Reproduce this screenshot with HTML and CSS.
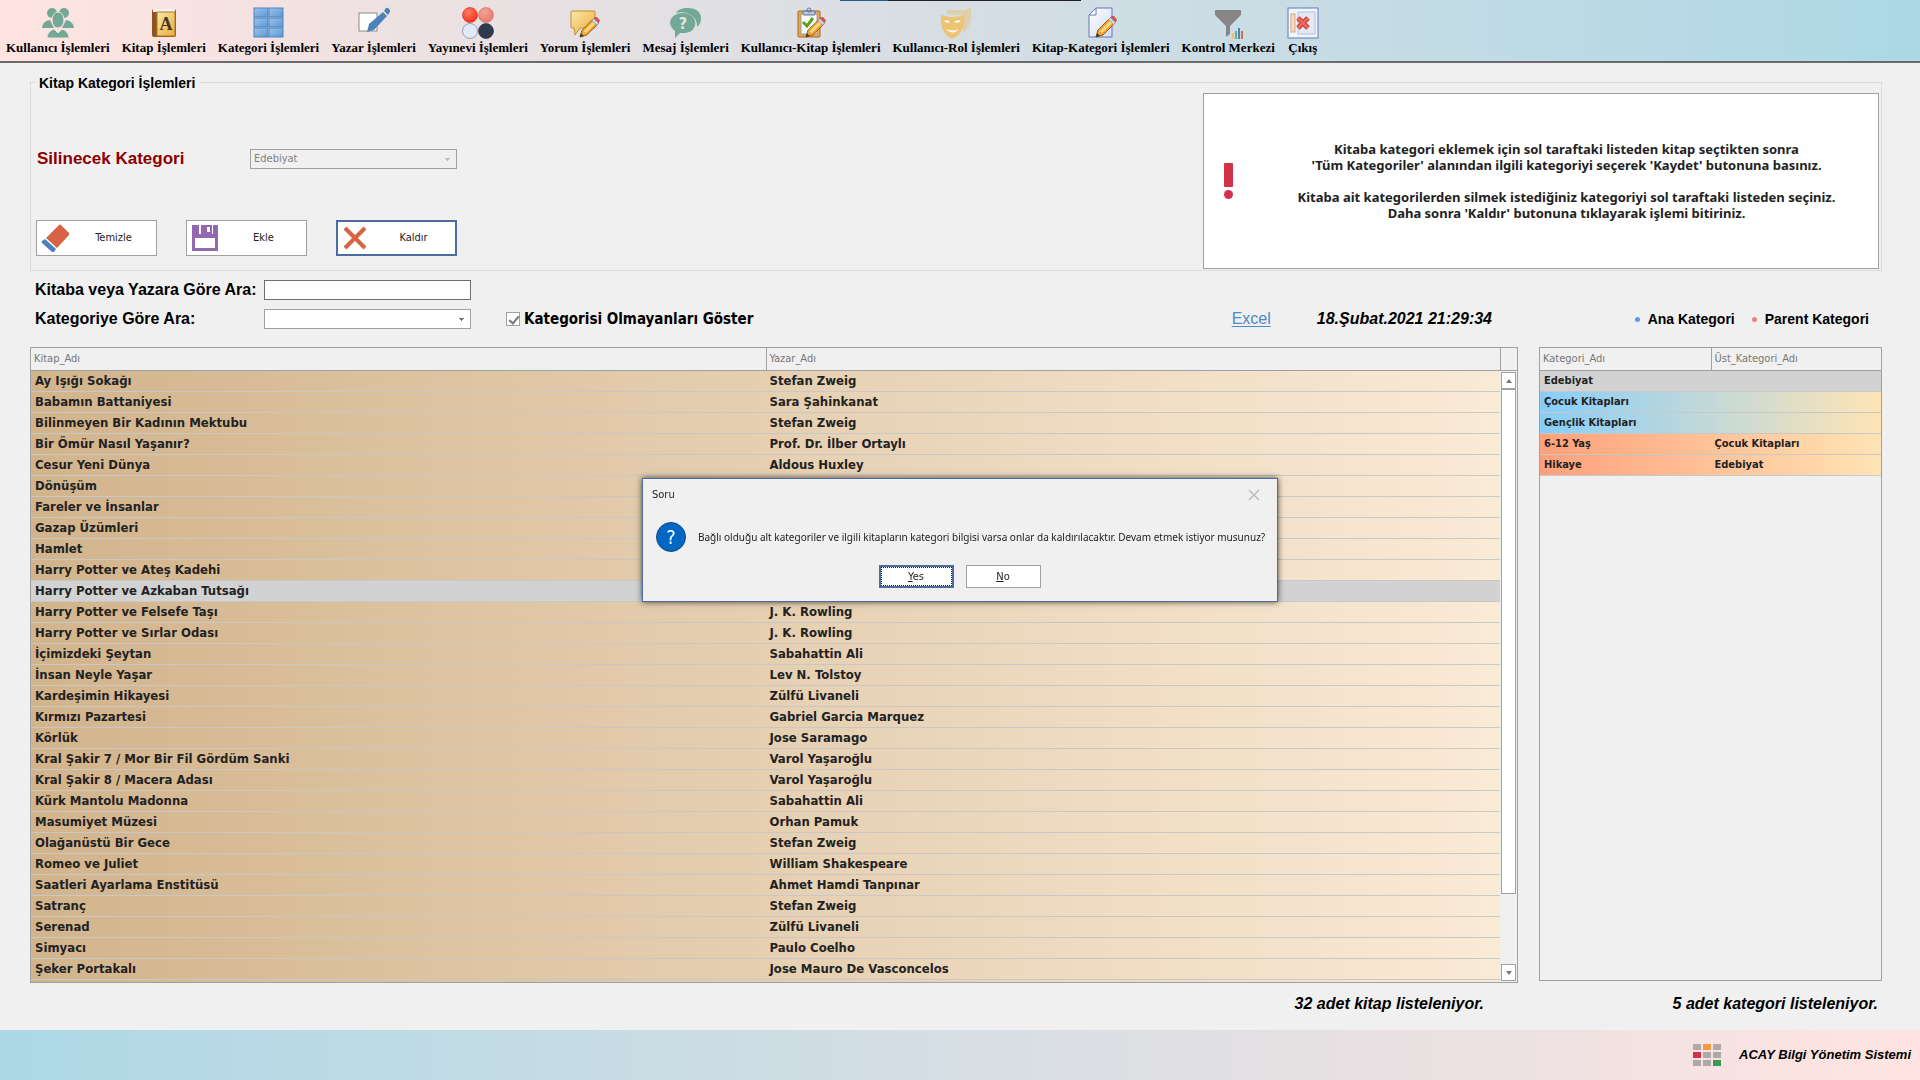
FILE: index.html
```html
<!DOCTYPE html>
<html lang="tr">
<head>
<meta charset="utf-8">
<meta name="viewport" content="width=device-width, initial-scale=1">
<title>Kitap Kategori İşlemleri</title>
<link rel="stylesheet" href="styles.css">
</head>
<body>
<svg class="defs" aria-hidden="true">
  <defs>
    <linearGradient id="gold" x1="0" y1="0" x2="1" y2="1"><stop offset="0" stop-color="#fbe7a6"/><stop offset="1" stop-color="#e9ad3c"/></linearGradient>
    <linearGradient id="paper" x1="0" y1="0" x2="1" y2="1"><stop offset="0" stop-color="#ffffff"/><stop offset="1" stop-color="#cfdcf3"/></linearGradient>
    <linearGradient id="tile" x1="0" y1="0" x2="1" y2="1"><stop offset="0" stop-color="#9cc4ea"/><stop offset="1" stop-color="#5b97d3"/></linearGradient>
    <radialGradient id="red" cx="0.4" cy="0.3" r="0.8"><stop offset="0" stop-color="#ff8064"/><stop offset="1" stop-color="#f02814"/></radialGradient>
    <radialGradient id="rose" cx="0.4" cy="0.3" r="0.8"><stop offset="0" stop-color="#f4a294"/><stop offset="1" stop-color="#e5746a"/></radialGradient>
    <symbol id="pencil" viewBox="0 0 22 22">
      <path d="M1 21l2-7L15 2l5 5L8 19z" fill="#f4a62c" stroke="#8a5a22"/>
      <path d="M5 15L16 4l2 2L7 17z" fill="#ffd98a"/>
      <path d="M15 2l2-1.500a1.500 1.500 0 0 1 2 0L21 3a1.500 1.500 0 0 1 0 2l-1.500 2z" fill="#e0544a" stroke="#a23c34" stroke-width=".6"/>
      <path d="M13.500 3.500l2-2 5 5-2 2z" fill="#cfd6e4" stroke="#7c86a0" stroke-width=".6"/>
      <path d="M1 21l1-4 3 3z" fill="#3c3440"/>
    </symbol>
  </defs>
</svg>

<header class="toolbar">
  <span class="edge-mark"></span>
  <button class="tool" type="button">
    <svg viewBox="0 0 32 32"><g fill="#73a897"><circle cx="10" cy="6" r="5"/><circle cx="22" cy="6" r="5"/><path d="M0 21c0-5 5-8 8-8l4 8zM32 21c0-5-5-8-8-8l-4 8z"/><ellipse cx="16" cy="13" rx="6" ry="8" stroke="#f9e2e0"/><path d="M5 31c0-5 4-8 7-9l4 4 4-4c3 1 7 4 7 9z" stroke="#f9e2e0"/></g></svg>
    Kullanıcı İşlemleri</button>
  <button class="tool" type="button">
    <svg viewBox="0 0 32 32"><rect x="4" y="2" width="24" height="28" rx="2" fill="#8d5524"/><rect x="5" y="2" width="22" height="3" fill="#f2f2f2"/><rect x="9" y="5" width="18" height="24" fill="url(#gold)" stroke="#b27a26"/><text x="18" y="23" text-anchor="middle" class="book-letter">A</text></svg>
    Kitap İşlemleri</button>
  <button class="tool" type="button">
    <svg viewBox="0 0 32 32"><g fill="url(#tile)" stroke="#4d86c2"><rect x="1" y="1" width="14" height="9"/><rect x="16" y="1" width="14" height="9"/><rect x="1" y="11" width="14" height="9"/><rect x="16" y="11" width="14" height="9"/><rect x="1" y="21" width="14" height="9"/><rect x="16" y="21" width="14" height="9"/></g></svg>
    Kategori İşlemleri</button>
  <button class="tool" type="button">
    <svg viewBox="0 0 32 32"><rect x="1" y="6" width="18" height="18" fill="#fff" stroke="#8a8a8a"/><path d="M9 25l2-8L25 5l4 4-13 14z" fill="#4b82bb"/><path d="M26 4l2-3a2 2 0 0 1 2 0l2 2a2 2 0 0 1 0 2l-2 3z" fill="#4b82bb"/></svg>
    Yazar İşlemleri</button>
  <button class="tool" type="button">
    <svg viewBox="0 0 32 32"><circle cx="8" cy="8" r="7.500" fill="url(#red)" stroke="#d0271c" stroke-width=".6"/><circle cx="24" cy="8" r="7.500" fill="url(#rose)" stroke="#cf675e" stroke-width=".6"/><circle cx="8" cy="24" r="7.500" fill="#e2e9f5" stroke="#8190b4" stroke-width=".8"/><circle cx="24" cy="24" r="7.500" fill="#303a4e" stroke="#1d2534" stroke-width=".6"/></svg>
    Yayınevi İşlemleri</button>
  <button class="tool" type="button">
    <svg viewBox="0 0 32 32"><path d="M3 4h22q1 0 1 1v15q0 1-1 1H11l-5 7-1-7H3q-1 0-1-1V5q0-1 1-1z" fill="url(#gold)" stroke="#c48e36"/><use href="#pencil" x="10" y="10" width="21" height="21"/></svg>
    Yorum İşlemleri</button>
  <button class="tool" type="button">
    <svg viewBox="0 0 32 32"><path d="M6 6C9-1 31-2 31 11c0 4-1 7-4 9 1-10-10-17-21-14z" fill="#73a897"/><path d="M13 6c15 0 17 19 2 20h-5l-5 5v-7C-4 18 0 6 13 6z" fill="#73a897"/><text x="13" y="22" text-anchor="middle" class="bubble-mark">?</text></svg>
    Mesaj İşlemleri</button>
  <button class="tool" type="button">
    <svg viewBox="0 0 32 32"><rect x="3" y="4" width="22" height="26" rx="1" fill="#eaa640" stroke="#a9681f"/><rect x="6" y="7" width="16" height="20" fill="#f7faff" stroke="#8ea0c4"/><rect x="8" y="4" width="12" height="4" rx="1" fill="#b9c4dd" stroke="#62719b"/><circle cx="14" cy="3" r="2" fill="none" stroke="#62719b"/><path d="M8 15l4 4 6-8" fill="none" stroke="#58a51c" stroke-width="3"/><use href="#pencil" x="10" y="10" width="21" height="21"/></svg>
    Kullanıcı-Kitap İşlemleri</button>
  <button class="tool" type="button">
    <svg viewBox="0 0 32 32"><path d="M7 2q12 3 24-1c1 12-2 21-8 25L21 8 7 7z" fill="#e0cfab"/><path d="M1 8q12 4 23 0c1 13-3 20-12 24C4 28 0 21 1 8z" fill="#eec373"/><path d="M4 14q4-2 6 1-3 2-6-1zM14 15q3-3 7-1-3 3-7 1zM6 22q7 3 13 0-6 7-13 0z" fill="#fff"/></svg>
    Kullanıcı-Rol İşlemleri</button>
  <button class="tool" type="button">
    <svg viewBox="0 0 32 32"><path d="M11 1h16v29H4V8z" fill="url(#paper)" stroke="#6378b4"/><path d="M11 1v7H4z" fill="#fff" stroke="#6378b4"/><use href="#pencil" x="10" y="9" width="22" height="22"/></svg>
    Kitap-Kategori İşlemleri</button>
  <button class="tool" type="button">
    <svg viewBox="0 0 32 32"><path d="M3 3h26v5L18 19v8l-4 3V19L3 8z" fill="#878585"/><path d="M20 26h2v6h-2z" fill="#f0c35e"/><path d="M23 24h2v8h-2z" fill="#73a897"/><path d="M26 21h2v11h-2z" fill="#4b82bb"/><path d="M29 24h2v8h-2z" fill="#d8694a"/></svg>
    Kontrol Merkezi</button>
  <button class="tool" type="button">
    <svg viewBox="0 0 32 32"><rect x="1" y="1" width="30" height="30" fill="#f1f5fc" stroke="#5c7cb8"/><rect x="11" y="5" width="17" height="22" fill="#e3eaf6" stroke="#b1bfdc"/><rect x="4" y="7" width="4" height="18" fill="#f5dcc2" stroke="#d9a77c"/><path d="M11 11l10 10M21 11L11 21" stroke="#c6332c" stroke-width="5"/><path d="M11 11l10 10M21 11L11 21" stroke="#ec6a5c" stroke-width="3"/></svg>
    Çıkış</button>
</header>

<main class="content">
  <section class="group">
    <h1 class="group-title">Kitap Kategori İşlemleri</h1>
    <div class="group-form">
      <div class="delete-row">
        <label class="delete-label" for="silinecek">Silinecek Kategori</label>
        <select class="box" id="silinecek" disabled><option>Edebiyat</option></select>
      </div>
      <div class="actions">
        <button class="action" type="button"><svg viewBox="0 0 28 28"><path d="M18 1q1-1 2 0l8 8q1 1 0 2L16 24 5 14z" fill="#d86344"/><path d="M4 15l11 10-2 3q-1 1-2 0L1 19q-1-1 0-2z" fill="#4b82bb"/></svg><span>Temizle</span></button>
        <button class="action" type="button"><svg viewBox="0 0 28 28"><path d="M1 1h26v26H1z" fill="#9468b0"/><path d="M8 1h14v9H8zM4 14h20v10H4z" fill="#fff"/><path d="M10 1h11v9H10z" fill="#9468b0"/><path d="M16 3h3v5h-3z" fill="#fff"/></svg><span>Ekle</span></button>
        <button class="action focused" type="button"><svg viewBox="0 0 28 28"><path d="M4 4l20 20M24 4L4 24" stroke="#d86344" stroke-width="4"/></svg><span>Kaldır</span></button>
      </div>
    </div>
    <aside class="info">
      <svg class="info-mark" viewBox="0 0 9 36"><rect width="9" height="24" rx="1" fill="#d13247"/><circle cx="4.500" cy="31.500" r="4.500" fill="#d13247"/></svg>
      <div class="info-text">
        <p>Kitaba kategori eklemek için sol taraftaki listeden kitap seçtikten sonra<br>'Tüm Kategoriler' alanından ilgili kategoriyi seçerek 'Kaydet' butonuna basınız.</p>
        <p>Kitaba ait kategorilerden silmek istediğiniz kategoriyi sol taraftaki listeden seçiniz.<br>Daha sonra 'Kaldır' butonuna tıklayarak işlemi bitiriniz.</p>
      </div>
    </aside>
  </section>

  <section class="filters">
    <div class="filter-row">
      <label class="filter-label" for="ara">Kitaba veya Yazara Göre Ara:</label>
      <input class="box dark" id="ara" type="text">
    </div>
    <div class="filter-row">
      <label class="filter-label" for="kategori">Kategoriye Göre Ara:</label>
      <select class="box" id="kategori"><option></option></select>
      <label class="check"><input type="checkbox" checked>Kategorisi Olmayanları Göster</label>
      <div class="filter-side">
        <a class="excel" href="#">Excel</a>
        <time class="clock" datetime="2021-02-18T21:29:34">18.Şubat.2021 21:29:34</time>
      </div>
      <ul class="legend">
        <li class="main-cat">Ana Kategori</li>
        <li class="parent-cat">Parent Kategori</li>
      </ul>
    </div>
  </section>

  <section class="lists">
    <div class="panel books">
      <table class="grid">
        <colgroup><col class="half"><col></colgroup>
        <thead><tr><th>Kitap_Adı</th><th>Yazar_Adı</th></tr></thead>
        <tbody>
          <tr><td>Ay Işığı Sokağı</td><td>Stefan Zweig</td></tr>
          <tr><td>Babamın Battaniyesi</td><td>Sara Şahinkanat</td></tr>
          <tr><td>Bilinmeyen Bir Kadının Mektubu</td><td>Stefan Zweig</td></tr>
          <tr><td>Bir Ömür Nasıl Yaşanır?</td><td>Prof. Dr. İlber Ortaylı</td></tr>
          <tr><td>Cesur Yeni Dünya</td><td>Aldous Huxley</td></tr>
          <tr><td>Dönüşüm</td><td></td></tr>
          <tr><td>Fareler ve İnsanlar</td><td></td></tr>
          <tr><td>Gazap Üzümleri</td><td></td></tr>
          <tr><td>Hamlet</td><td></td></tr>
          <tr><td>Harry Potter ve Ateş Kadehi</td><td></td></tr>
          <tr class="selected"><td>Harry Potter ve Azkaban Tutsağı</td><td></td></tr>
          <tr><td>Harry Potter ve Felsefe Taşı</td><td>J. K. Rowling</td></tr>
          <tr><td>Harry Potter ve Sırlar Odası</td><td>J. K. Rowling</td></tr>
          <tr><td>İçimizdeki Şeytan</td><td>Sabahattin Ali</td></tr>
          <tr><td>İnsan Neyle Yaşar</td><td>Lev N. Tolstoy</td></tr>
          <tr><td>Kardeşimin Hikayesi</td><td>Zülfü Livaneli</td></tr>
          <tr><td>Kırmızı Pazartesi</td><td>Gabriel Garcia Marquez</td></tr>
          <tr><td>Körlük</td><td>Jose Saramago</td></tr>
          <tr><td>Kral Şakir 7 / Mor Bir Fil Gördüm Sanki</td><td>Varol Yaşaroğlu</td></tr>
          <tr><td>Kral Şakir 8 / Macera Adası</td><td>Varol Yaşaroğlu</td></tr>
          <tr><td>Kürk Mantolu Madonna</td><td>Sabahattin Ali</td></tr>
          <tr><td>Masumiyet Müzesi</td><td>Orhan Pamuk</td></tr>
          <tr><td>Olağanüstü Bir Gece</td><td>Stefan Zweig</td></tr>
          <tr><td>Romeo ve Juliet</td><td>William Shakespeare</td></tr>
          <tr><td>Saatleri Ayarlama Enstitüsü</td><td>Ahmet Hamdi Tanpınar</td></tr>
          <tr><td>Satranç</td><td>Stefan Zweig</td></tr>
          <tr><td>Serenad</td><td>Zülfü Livaneli</td></tr>
          <tr><td>Simyacı</td><td>Paulo Coelho</td></tr>
          <tr><td>Şeker Portakalı</td><td>Jose Mauro De Vasconcelos</td></tr>
        </tbody>
      </table>
      <div class="scroll">
        <div class="scroll-head"></div>
        <div class="scroll-track">
          <button class="scroll-btn up" type="button" aria-label="Yukarı"></button>
          <div class="scroll-thumb"></div>
          <button class="scroll-btn down" type="button" aria-label="Aşağı"></button>
        </div>
      </div>
    </div>
    <div class="panel categories">
      <table class="grid small">
        <colgroup><col class="half"><col></colgroup>
        <thead><tr><th>Kategori_Adı</th><th>Üst_Kategori_Adı</th></tr></thead>
        <tbody>
          <tr class="selected"><td>Edebiyat</td><td></td></tr>
          <tr class="main-row"><td>Çocuk Kitapları</td><td></td></tr>
          <tr class="main-row"><td>Gençlik Kitapları</td><td></td></tr>
          <tr class="parent-row"><td>6-12 Yaş</td><td>Çocuk Kitapları</td></tr>
          <tr class="parent-row"><td>Hikaye</td><td>Edebiyat</td></tr>
        </tbody>
      </table>
    </div>
    <p class="total books-total">32 adet kitap listeleniyor.</p>
    <p class="total">5 adet kategori listeleniyor.</p>
  </section>
</main>

<footer class="footer">
  <svg class="logo" viewBox="0 0 28 22"><g fill="#b0a9ac"><path d="M0 0h8v6H0zM20 0h8v6h-8zM10 8h8v6h-8zM20 8h8v6h-8zM0 16h8v6H0zM10 16h8v6h-8z"/></g><path d="M10 0h8v6h-8z" fill="#f39a42"/><path d="M0 8h8v6H0z" fill="#d13247"/><path d="M20 16h8v6h-8z" fill="#3a9a56"/></svg>
  <span>ACAY Bilgi Yönetim Sistemi</span>
</footer>

<dialog class="dialog" open aria-labelledby="soru">
  <div class="dialog-head">
    <h2 class="dialog-title" id="soru">Soru</h2>
    <button class="dialog-close" type="button" aria-label="Kapat"><svg viewBox="0 0 12 12"><path d="M1 1l10 10M11 1L1 11" stroke="#bdbdbd" stroke-width="1.500"/></svg></button>
  </div>
  <div class="dialog-body">
    <svg class="dialog-icon" viewBox="0 0 30 30"><circle cx="15" cy="15" r="14.500" fill="#0067c5" stroke="#104a80"/><text x="15" y="22" text-anchor="middle" class="question-mark">?</text></svg>
    <p>Bağlı olduğu alt kategoriler ve ilgili kitapların kategori bilgisi varsa onlar da kaldırılacaktır. Devam etmek istiyor musunuz?</p>
  </div>
  <div class="dialog-actions">
    <button class="answer default" type="button"><span><u>Y</u>es</span></button>
    <button class="answer" type="button"><span><u>N</u>o</span></button>
  </div>
</dialog>
</body>
</html>
```
FILE: styles.css
```css
:root {
  --ui: "DejaVu Sans Condensed", "DejaVu Sans", sans-serif;
  --label: "Liberation Sans", sans-serif;
  --line: #a0a0a0;
  --soft-line: #dcdcdc;
  --surface: #f0f0f0;
  --accent: #4a6c9f;
}

* { box-sizing: border-box; }

body {
  margin: 0;
  min-height: 100vh;
  display: flex;
  flex-direction: column;
  background: var(--surface);
  color: #000;
  font: 11px/16px var(--ui);
}

h1, h2, p, ul { margin: 0; padding: 0; }
button { font: inherit; color: inherit; cursor: pointer; }
.defs { position: absolute; width: 0; height: 0; }

/* Toolbar */
.toolbar {
  position: relative;
  display: flex;
  gap: 12px;
  height: 63px;
  padding: 7px 6px 0;
  border-bottom: 2px solid #6b6b6b;
  background: linear-gradient(to right, #ffe4e1, #add8e6);
}
.edge-mark {
  position: absolute;
  top: 0;
  left: 840px;
  width: 241px;
  height: 1px;
  background: linear-gradient(to right, #1f5f8b 20%, #20202a 20%);
}
.tool {
  display: flex;
  flex-direction: column;
  align-items: center;
  padding: 0;
  border: 0;
  background: none;
  white-space: nowrap;
  font: bold 13px/16px "Liberation Serif", serif;
}
.tool svg { width: 32px; height: 32px; margin-bottom: 1px; }
.book-letter { font: bold 18px "Liberation Serif", serif; fill: #4a3520; }
.bubble-mark { font: bold 16px var(--ui); fill: #e8e4e6; }

/* Content */
.content {
  flex: 1;
  display: flex;
  flex-direction: column;
  padding: 19px 38px 16px 30px;
}

.group {
  position: relative;
  display: flex;
  justify-content: space-between;
  height: 189px;
  padding: 10px 2px 1px 5px;
  border: 1px solid var(--soft-line);
}
.group-title {
  position: absolute;
  top: -8px;
  left: 4px;
  padding: 0 4px;
  background: var(--surface);
  font: bold 14px/16px var(--label);
}
.group-form {
  display: flex;
  flex-direction: column;
  justify-content: flex-end;
  gap: 51px;
  padding-bottom: 13px;
}
.delete-row { display: flex; align-items: center; padding-left: 1px; }
.delete-label {
  width: 213px;
  color: #8b0000;
  font: bold 17px/20px var(--label);
}
.box {
  width: 207px;
  height: 20px;
  padding: 0 3px;
  border: 1px solid var(--line);
  border-radius: 0;
  background: #fff;
  color: #222;
  font: 11px/16px var(--ui);
}
.box.dark { border-color: #6e6e6e; }
select.box {
  appearance: none;
  background: linear-gradient(to right, #777, #777) right 6px top 8px / 5px 1px no-repeat,
              linear-gradient(to right, #777, #777) right 7px top 9px / 3px 1px no-repeat,
              linear-gradient(to right, #777, #777) right 8px top 10px / 1px 1px no-repeat, #fff;
}
select.box:disabled {
  opacity: 1;
  color: #808080;
  background: linear-gradient(to right, #bbb, #bbb) right 6px top 8px / 5px 1px no-repeat,
              linear-gradient(to right, #bbb, #bbb) right 7px top 9px / 3px 1px no-repeat,
              linear-gradient(to right, #bbb, #bbb) right 8px top 10px / 1px 1px no-repeat, var(--surface);
}
.actions { display: flex; gap: 29px; }
.action {
  display: flex;
  align-items: center;
  width: 121px;
  height: 36px;
  padding: 0 4px;
  border: 1px solid var(--line);
  background: #fff;
  color: #222;
}
.action svg { width: 28px; height: 28px; }
.action span { flex: 1; padding-left: 6px; text-align: center; }
.action.focused { padding: 0 3px; border: 2px solid var(--accent); }

.info {
  display: flex;
  align-items: center;
  width: 676px;
  border: 1px solid var(--line);
  background: #fff;
  color: #222;
}
.info-mark { width: 9px; height: 36px; margin-left: 20px; }
.info-text {
  flex: 1;
  display: grid;
  gap: 16px;
  padding-left: 22px;
  text-align: center;
  font: bold 13px/16px "Noto Sans", sans-serif;
}

/* Filters */
.filters {
  display: grid;
  gap: 9px;
  padding: 9px 0 18px;
}
.filter-row { display: flex; align-items: center; height: 20px; white-space: nowrap; }
.filter-label { width: 234px; padding-left: 5px; font: bold 16px/20px var(--label); }
.check {
  display: flex;
  align-items: center;
  gap: 4px;
  padding-left: 35px;
  font: bold 15px/20px var(--ui);
}
.check input {
  appearance: none;
  width: 14px;
  height: 14px;
  margin: 0;
  border: 1px solid var(--line);
  background: #fff;
  position: relative;
}
.check input:checked::after {
  content: "";
  position: absolute;
  left: 4px;
  top: 1px;
  width: 4px;
  height: 8px;
  border: solid #777;
  border-width: 0 2px 2px 0;
  transform: rotate(40deg);
}
.filter-side { display: flex; align-items: center; gap: 46px; margin-left: auto; }
.excel { color: #4a8bcb; font: 16px/20px var(--label); text-underline-offset: 2px; }
.clock { font: italic bold 16px/20px var(--label); }
.legend {
  display: flex;
  justify-content: flex-end;
  gap: 17px;
  width: 390px;
  padding-right: 13px;
  list-style: none;
  font: bold 14px/20px var(--label);
}
.legend li { display: flex; align-items: center; gap: 8px; }
.legend li::before { content: ""; width: 5px; height: 5px; border-radius: 50%; }
.main-cat::before { background: #6495ed; }
.parent-cat::before { background: #f08080; }

/* Lists */
.lists {
  flex: 1;
  display: grid;
  grid-template-columns: 1fr 343px;
  grid-template-rows: 1fr 20px;
  gap: 11px 21px;
}
.panel { border: 1px solid var(--line); }
.books { display: flex; background: linear-gradient(to right, #d2b48c, #faebd7); }
.categories { margin-bottom: 2px; }
.grid {
  flex: 1;
  width: 100%;
  height: max-content;
  table-layout: fixed;
  border-collapse: separate;
  border-spacing: 0;
}
.half { width: 50%; }
.grid th {
  height: 23px;
  padding: 0 3px;
  border-bottom: 1px solid var(--line);
  border-left: 1px solid var(--line);
  background: var(--surface);
  color: #777;
  font-weight: normal;
  text-align: left;
}
.grid th:first-child { border-left: 0; }
.grid td {
  height: 21px;
  padding: 0 4px;
  border-bottom: 1px solid #c8c8c8;
  color: #222;
  font: bold 13px/16px var(--ui);
}
.grid.small td { font-size: 11px; }
.selected { background: #d2d2d2; }
.main-row { background: linear-gradient(to right, #87cefa, #ffe4b5); }
.parent-row { background: linear-gradient(to right, #ffa07a, #ffe4b5); }

.scroll { display: flex; flex-direction: column; width: 17px; background: var(--surface); }
.scroll-head { height: 23px; border: solid var(--line); border-width: 0 0 1px 1px; }
.scroll-track { flex: 1; display: flex; flex-direction: column; padding: 1px; }
.scroll-btn {
  display: grid;
  place-items: center;
  height: 17px;
  padding: 0;
  border: 1px solid var(--line);
  background: #fff;
}
.scroll-btn::before { content: ""; border: solid transparent; border-width: 0 3px; }
.up::before { border-bottom: 4px solid #777; }
.down::before { border-top: 4px solid #777; }
.scroll-thumb { flex: 1; border: 1px solid var(--line); background: #fff; }
.scroll-thumb + .down { margin-top: 70px; }

.total { padding-right: 4px; text-align: right; font: italic bold 16px/20px var(--label); }
.books-total { padding-right: 34px; }

/* Footer */
.footer {
  display: flex;
  align-items: center;
  justify-content: flex-end;
  gap: 18px;
  height: 50px;
  padding-right: 9px;
  background: linear-gradient(to right, #add8e6, #ffe4e1);
  font: italic bold 13px/16px var(--label);
}
.logo { width: 28px; height: 22px; }

/* Dialog */
.dialog {
  position: fixed;
  inset: 0;
  width: 636px;
  height: 124px;
  margin: auto;
  padding: 6px 10px 12px 9px;
  border: 1px solid var(--accent);
  background: var(--surface);
  color: #222;
  box-shadow: 0 0 6px rgba(0, 0, 0, .7);
}
.dialog-head { display: flex; align-items: center; justify-content: space-between; height: 20px; }
.dialog-title { font: 11px/16px var(--ui); }
.dialog-close { width: 26px; height: 20px; padding: 4px 7px; border: 0; background: none; }
.dialog-close svg { display: block; width: 12px; height: 12px; }
.dialog-body {
  display: flex;
  align-items: center;
  gap: 12px;
  padding: 17px 0 13px 4px;
  white-space: nowrap;
  font: 10px/16px "Noto Sans", sans-serif;
}
.dialog-icon { width: 30px; height: 30px; }
.question-mark { font: 20px var(--ui); fill: #fff; }
.dialog-actions { display: flex; justify-content: center; gap: 12px; }
.answer {
  width: 75px;
  height: 23px;
  padding: 0;
  border: 1px solid var(--line);
  background: #fff;
}
.answer.default { border: 2px solid var(--accent); outline: 1px dotted #222; outline-offset: -3px; }
```
